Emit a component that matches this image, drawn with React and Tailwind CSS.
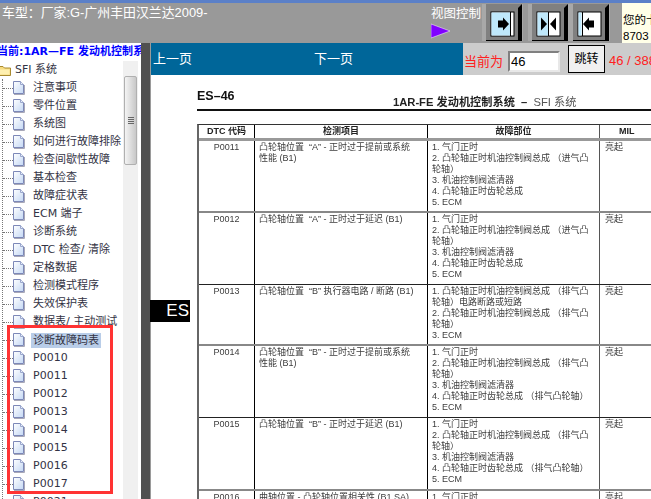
const treeItems = ["注意事项","零件位置","系统图","如何进行故障排除","检查间歇性故障","基本检查","故障症状表","ECM 端子","诊断系统","DTC 检查/ 清除","定格数据","检测模式程序","失效保护表","数据表/ 主动测试","诊断故障码表","P0010","P0011","P0012","P0013","P0014","P0015","P0016","P0017","P0021"];

const intake = ["1. 气门正时","2. 凸轮轴正时机油控制阀总成 （进气凸","轮轴）","3. 机油控制阀滤清器","4. 凸轮轴正时齿轮总成","5. ECM"];
const exhaust = ["1. 气门正时","2. 凸轮轴正时机油控制阀总成 （排气凸","轮轴）","3. 机油控制阀滤清器","4. 凸轮轴正时齿轮总成 （排气凸轮轴）","5. ECM"];
const rows = [
  { code: "P0011", h: "h-[72px] border-b-2 border-[#888888]", item: ["凸轮轴位置 \u00a0“A” - 正时过于提前或系统","性能 (B1)"], parts: intake },
  { code: "P0012", h: "h-[72px] border-b border-[#222222]", item: ["凸轮轴位置 \u00a0“A” - 正时过于延迟 (B1)"], parts: intake },
  { code: "P0013", h: "h-[61px] border-b-2 border-[#888888]", item: ["凸轮轴位置 \u00a0“B” 执行器电路 / 断路 (B1)"], parts: ["1. 凸轮轴正时机油控制阀总成 （排气凸","轮轴）电路断路或短路","2. 凸轮轴正时机油控制阀总成 （排气凸","轮轴）","3. ECM"] },
  { code: "P0014", h: "h-[72px] border-b border-[#222222]", item: ["凸轮轴位置 \u00a0“B” - 正时过于提前或系统","性能 (B1)"], parts: exhaust },
  { code: "P0015", h: "h-[73px] border-b-2 border-[#888888]", item: ["凸轮轴位置 \u00a0“B” - 正时过于延迟 (B1)"], parts: exhaust },
  { code: "P0016", h: "h-[60px]", item: ["曲轴位置 - 凸轮轴位置相关性 (B1 SA)"], parts: ["1. 气门正时"] },
];

function DocIcon() {
  return (
    <svg width="12" height="14" viewBox="0 0 12 14" className="shrink-0">
      <defs>
        <linearGradient id="docFill" x1="0" y1="0" x2="1" y2="1">
          <stop offset="0" stopColor="#ffffff" />
          <stop offset="1" stopColor="#c4d8f4" />
        </linearGradient>
      </defs>
      <path d="M0.5 0.5H7.5L10.5 3.5V12.5H0.5Z" fill="url(#docFill)" stroke="#7c88b8" />
      <path d="M7.5 0.5V3.5H10.5" fill="#e8f0fc" stroke="#9aa6cc" />
      <path d="M1 13.5H11.5V4" fill="none" stroke="#a8a8b8" />
    </svg>
  );
}

function FolderIcon() {
  return (
    <svg width="14" height="13" viewBox="0 0 14 13" className="shrink-0">
      <path d="M0.5 2.5H5L6.5 4H12.5V11.5H0.5Z" fill="#f8dc80" stroke="#a88a30" />
      <path d="M1.5 5.5H11.5V10.5H1.5Z" fill="#fff0b0" />
    </svg>
  );
}

function ViewButton({ kind }) {
  return (
    <svg width="41" height="37" viewBox="0 0 41 37" className="shrink-0">
      <rect x="0" y="0" width="41" height="37" fill="#a8a8a8" />
      <rect x="4" y="0" width="36" height="37" fill="#808080" />
      <path d="M36 4L40 0V37H36Z" fill="#000" />
      <path d="M4 36H36V37H4Z" fill="#000" />
      <rect x="9" y="8" width="23" height="24" fill="#fff" stroke="#000" />
      {kind === "right" && (
        <>
          <rect x="9.5" y="8.5" width="19" height="23" fill="#bfe8fb" />
          <rect x="28" y="8" width="1" height="24" fill="#000" />
          <path d="M16 16.5H21V13.5L27 20L21 26.5V23.5H16Z" fill="#000" />
        </>
      )}
      {kind === "both" && (
        <>
          <rect x="9.5" y="8.5" width="11" height="23" fill="#bfe8fb" />
          <rect x="20" y="8" width="1" height="24" fill="#000" />
          <path d="M13 13.5L19 20L13 26.5Z" fill="#000" />
          <path d="M28 13.5L22 20L28 26.5Z" fill="#000" />
        </>
      )}
      {kind === "left" && (
        <>
          <rect x="9.5" y="8.5" width="3" height="23" fill="#bfe8fb" />
          <rect x="13" y="8" width="1" height="24" fill="#000" />
          <path d="M25 16.5H20V13.5L14 20L20 26.5V23.5H25Z" fill="#000" />
        </>
      )}
    </svg>
  );
}

function Lines({ lines }) {
  return lines.map((l, i) => <div key={i} className="whitespace-nowrap">{l}</div>);
}

export default function App() {
  return (
    <div className="relative flex h-[499px] w-[651px] flex-col overflow-hidden bg-white text-[12px] [font-family:'Liberation_Sans','Noto_Sans_CJK_SC',sans-serif]">
      <div className="h-[3px] shrink-0 bg-[#5b80c8]" />
      <div className="flex h-[40px] shrink-0 bg-[#999999]">
        <div className="w-[430px] shrink-0 pl-[2px] pt-[1px] text-[12.9px] leading-[17px] text-white">车型：厂家:G-广州丰田汉兰达2009-</div>
        <div className="flex w-[52px] shrink-0 flex-col pl-[1px] pt-[3px]">
          <div className="whitespace-nowrap text-[12.5px] leading-[16px] text-white">视图控制</div>
          <svg width="20" height="16" viewBox="0 0 20 16" className="mt-[1px]"><path d="M0 1L19 8L0 15Z" fill="#8000ff" stroke="#fff" strokeWidth="0.5" /></svg>
        </div>
        <div className="flex pt-[1px]">
          <ViewButton kind="right" />
          <div className="ml-[5px]"><ViewButton kind="both" /></div>
          <ViewButton kind="left" />
        </div>
        <div className="ml-[12px] flex-1 overflow-hidden bg-[#ffffe8] pl-[1px] pt-[9px] text-[11.5px] leading-[16px] text-black">
          <div className="whitespace-nowrap">您的卡</div>
          <div className="whitespace-nowrap">8703</div>
        </div>
      </div>

      <div className="flex min-h-0 flex-1">
        <div className="flex w-[141px] shrink-0 flex-col overflow-hidden bg-white [font-family:'DejaVu_Sans','Noto_Sans_CJK_SC',sans-serif]">
          <div className="h-[18px] shrink-0 -ml-[3px] whitespace-nowrap pt-[1px] text-[11px] font-bold leading-[15px] text-[#0000ff]">当前:1AR—FE 发动机控制系统</div>
          <div className="flex min-h-0 flex-1">
            <div className="w-[123px] shrink-0 overflow-hidden text-[11px] text-[#333344]">
              <div className="-ml-[2px] flex h-[18px] items-center gap-[3px]">
                <FolderIcon />
                <span>SFI 系统</span>
              </div>
              <div className="ml-[2px] border-l border-dotted border-[#777777]">
                {treeItems.map((t, i) => (
                  <div key={t} className="flex h-[18px] items-center">
                    <div className="w-[10px] shrink-0 border-t border-dotted border-[#777777]" />
                    <DocIcon />
                    <span className={i === 14 ? "ml-[6px] whitespace-nowrap bg-[#b9cde8] px-[2px] leading-[15px]" : "ml-[8px] whitespace-nowrap"}>{t}</span>
                  </div>
                ))}
              </div>
            </div>
            <div className="w-[15px] shrink-0 bg-[#f0f0f0] pt-[15px]">
              <div className="mx-[1px] flex h-[89px] flex-col justify-center gap-[1px] rounded-[2px] border border-[#b0b0b0] bg-gradient-to-r from-[#f4f4f4] to-[#c8c8c8] pl-[3px]">
                <div className="h-px w-[6px] bg-[#666]" />
                <div className="h-px w-[6px] bg-[#666]" />
                <div className="h-px w-[6px] bg-[#666]" />
                <div className="h-px w-[6px] bg-[#666]" />
              </div>
            </div>
            <div className="w-[3px] shrink-0 bg-white" />
          </div>
        </div>

        <div className="w-[9px] shrink-0 bg-[#505050]" />

        <div className="flex min-w-0 flex-1 flex-col border-l border-[#9a9a9a]">
          <div className="flex h-[32px] shrink-0 bg-[#006699]">
            <div className="w-[163px] shrink-0 pl-[2px] pt-[7px] text-[13px] leading-[18px] text-white">上一页</div>
            <div className="w-[149px] shrink-0 pt-[7px] text-[13px] leading-[18px] text-white">下一页</div>
            <div className="flex flex-1 items-center overflow-hidden bg-[#cccccc] pl-[1px]">
              <span className="mt-[5px] whitespace-nowrap text-[13px] text-[#ff2020]">当前为</span>
              <input readOnly value="46" className="ml-[5px] mt-[4px] h-[21px] w-[52px] border-2 border-[#808080] border-r-[#e8e8e8] border-b-[#e8e8e8] bg-white pl-[1px] text-[13px] text-black outline-none" />
              <div className="ml-[8px] flex h-[28px] w-[37px] shrink-0 items-center justify-center border border-black bg-[#f0f0f0] text-[12px] text-black">跳转</div>
              <span className="ml-[4px] mt-[3px] whitespace-nowrap text-[13px] text-[#ff2020]">46 / 388</span>
            </div>
          </div>

          <div className="min-h-0 flex-1 overflow-hidden pl-[46px] pr-0 text-[#3c3c3c] blur-[0.4px]">
            <div className="w-[520px]">
              <div className="flex h-[36px] items-start border-b-2 border-[#111111]">
                <div className="mt-[14px] w-[196px] text-[12.5px] font-bold leading-[15px] text-[#111]">ES–46</div>
                <div className="mt-[20px] whitespace-nowrap text-[11.2px] leading-[14px] text-[#222]"><b>1AR-FE 发动机控制系统 &nbsp;–</b>&nbsp; <span className="text-[#555]">SFI 系统</span></div>
              </div>
              <div className="mt-[13px] border-l-2 border-t border-l-[#666666] border-t-[#333] text-[9px] leading-[11px]">
                <div className="grid h-[16px] grid-cols-[56px_173px_172px_118px] border-b-[3px] border-[#999] font-bold text-[#222]">
                  <div className="border-r border-black pt-[1px] text-center">DTC 代码</div>
                  <div className="border-r border-black pt-[1px] text-center">检测项目</div>
                  <div className="border-r border-[#555] pt-[1px] text-center">故障部位</div>
                  <div className="pl-[19px] pt-[1px]">MIL</div>
                </div>
                {rows.map((r) => (
                  <div key={r.code} className={"grid grid-cols-[56px_173px_172px_118px] " + r.h}>
                    <div className="border-r border-black pt-[1px] text-center">{r.code}</div>
                    <div className="border-r border-black pl-[4px] pt-[1px]"><Lines lines={r.item} /></div>
                    <div className="border-r border-[#555] pl-[4px] pt-[1px]"><Lines lines={r.parts} /></div>
                    <div className="pl-[5px] pt-[1px]">亮起</div>
                  </div>
                ))}
              </div>
            </div>
          </div>
        </div>
      </div>

      <div className="absolute left-[150px] top-[300px] flex h-[22px] w-[40px] items-center justify-end bg-black pr-[1px] text-[17px] text-white">ES</div>
      <div className="pointer-events-none absolute left-[7px] top-[325px] h-[169px] w-[106px] border-[3px] border-[#ff3333]" />
    </div>
  );
}
